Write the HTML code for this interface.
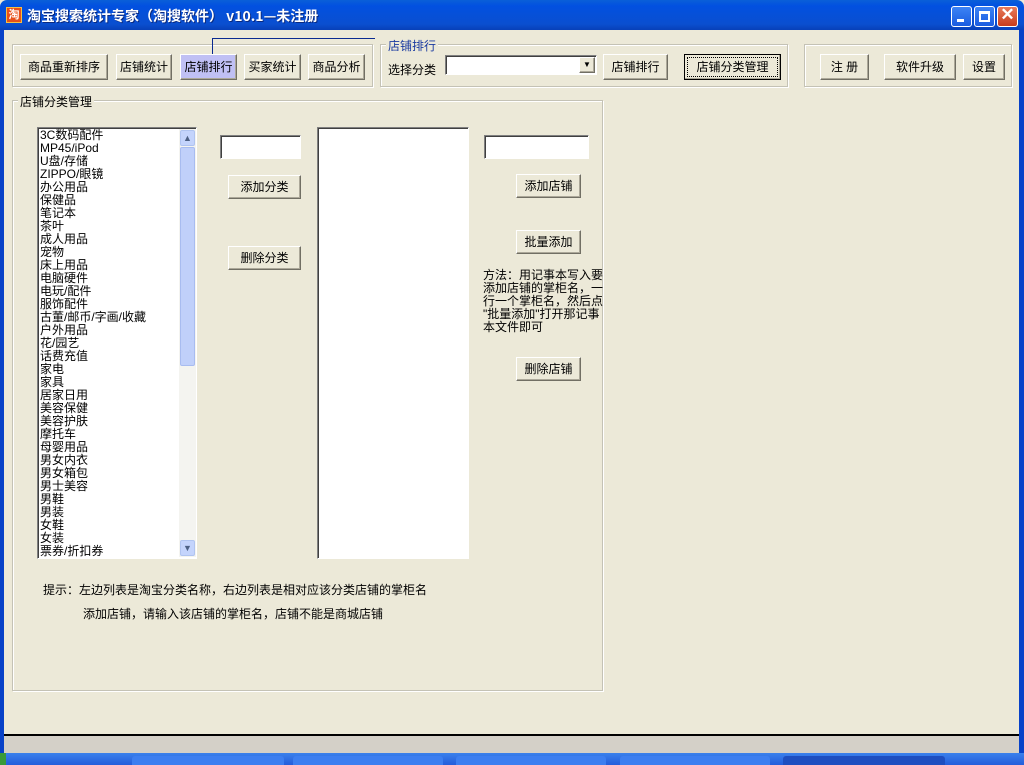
<!DOCTYPE html>
<html><head><meta charset="utf-8"><style>
*{margin:0;padding:0;box-sizing:border-box}
body{width:1024px;height:765px;overflow:hidden;background:#ece9d8;position:relative;font-family:"Liberation Sans","Noto Sans CJK SC","WenQuanYi Zen Hei",sans-serif;font-size:12px;color:#000}
.a{position:absolute}
.title{left:0;top:0;width:1024px;height:30px;background:linear-gradient(#0a5fd8,#0250e0 20%,#0a4fd0 80%,#0840b8);border-radius:7px 7px 0 0}
.title span{position:absolute;left:27px;top:6px;color:#fff;font-weight:bold;font-size:14px;font-family:"WenQuanYi Zen Hei","Noto Sans CJK SC",sans-serif;text-shadow:1px 1px #0a2a80}
.fl{left:0;top:30px;width:4px;height:723px;background:#0842c8}
.fr{left:1019px;top:30px;width:5px;height:723px;background:#0842c8}
.btn{position:absolute;background:#ece9d8;border:1px solid;border-color:#fff #716f64 #716f64 #fff;box-shadow:inset -1px -1px #aca899;text-align:center;line-height:22px;font-size:12px}
.grp{position:absolute;border:1px solid #c4c2b5;box-shadow:1px 1px #fff, inset 1px 1px #fff}
.lbl{position:absolute;background:#ece9d8;padding:0 2px;font-size:12px}
.sunk{position:absolute;background:#fff;border:1px solid;border-color:#808080 #fff #fff #808080;box-shadow:inset 1px 1px #404040}
.list div{height:13px;line-height:13px;font-size:12px;white-space:nowrap}
.wb{position:absolute;top:6px;width:21px;height:21px;border:1px solid #fff;border-radius:3px;background:linear-gradient(#3c83f5,#1a5ce0)}
</style></head><body>
<div class="a title"><div class="a" style="left:6px;top:7px;width:16px;height:16px;background:#e8501a;border:1px solid #f8c040;color:#fff;font-size:11px;line-height:14px;text-align:center;font-weight:bold">淘</div><span>淘宝搜索统计专家（淘搜软件） v10.1—未注册</span>
<div class="wb" style="left:951px"><div class="a" style="left:5px;top:12px;width:7px;height:3px;background:#fff"></div></div>
<div class="wb" style="left:974px"><div class="a" style="left:4px;top:4px;width:11px;height:11px;border:2px solid #fff;border-top-width:3px"></div></div>
<div class="wb" style="left:997px;background:linear-gradient(#e87a5a,#c83c1c)"><div class="a" style="left:0;top:-2px;width:19px;text-align:center;color:#fff;font-size:17px;font-weight:bold">✕</div></div>
</div>
<div class="a fl"></div><div class="a fr"></div>

<div class="grp" style="left:12px;top:44px;width:361px;height:43px"></div>
<div class="btn" style="left:20px;top:54px;width:88px;height:26px;line-height:24px">商品重新排序</div>
<div class="btn" style="left:116px;top:54px;width:56px;height:26px;line-height:24px">店铺统计</div>
<div class="btn" style="left:180px;top:54px;width:57px;height:26px;line-height:24px;background:#c0c0f4">店铺排行</div>
<div class="btn" style="left:244px;top:54px;width:57px;height:26px;line-height:24px">买家统计</div>
<div class="btn" style="left:308px;top:54px;width:57px;height:26px;line-height:24px">商品分析</div>
<div class="a" style="left:212px;top:38px;width:163px;height:1px;background:#0a2a90"></div>
<div class="a" style="left:212px;top:38px;width:1px;height:16px;background:#0a2a90"></div>

<div class="grp" style="left:380px;top:44px;width:408px;height:43px"></div>
<div class="lbl" style="left:386px;top:37px;color:#1a3aa0">店铺排行</div>
<div class="a" style="left:388px;top:61px">选择分类</div>
<div class="sunk" style="left:445px;top:55px;width:152px;height:20px"><div class="btn" style="left:133px;top:1px;width:16px;height:16px;line-height:14px;font-size:8px">▼</div></div>
<div class="btn" style="left:603px;top:54px;width:65px;height:26px;line-height:24px">店铺排行</div>
<div class="btn" style="left:684px;top:54px;width:97px;height:26px;line-height:22px;border:1px solid #000"><div style="margin:2px;border:1px dotted #000;height:20px;line-height:18px">店铺分类管理</div></div>

<div class="grp" style="left:804px;top:44px;width:208px;height:43px"></div>
<div class="btn" style="left:820px;top:54px;width:49px;height:26px;line-height:24px">注 册</div>
<div class="btn" style="left:884px;top:54px;width:72px;height:26px;line-height:24px">软件升级</div>
<div class="btn" style="left:963px;top:54px;width:42px;height:26px;line-height:24px">设置</div>

<div class="grp" style="left:12px;top:100px;width:591px;height:591px"></div>
<div class="lbl" style="left:18px;top:93px">店铺分类管理</div>

<div class="sunk list" style="left:37px;top:127px;width:160px;height:432px;padding:1px 0 0 2px;overflow:hidden">
<div>3C数码配件</div><div>MP45/iPod</div><div>U盘/存储</div><div>ZIPPO/眼镜</div><div>办公用品</div><div>保健品</div><div>笔记本</div><div>茶叶</div><div>成人用品</div><div>宠物</div><div>床上用品</div><div>电脑硬件</div><div>电玩/配件</div><div>服饰配件</div><div>古董/邮币/字画/收藏</div><div>户外用品</div><div>花/园艺</div><div>话费充值</div><div>家电</div><div>家具</div><div>居家日用</div><div>美容保健</div><div>美容护肤</div><div>摩托车</div><div>母婴用品</div><div>男女内衣</div><div>男女箱包</div><div>男士美容</div><div>男鞋</div><div>男装</div><div>女鞋</div><div>女装</div><div>票券/折扣券</div>
<div class="a" style="left:141px;top:1px;width:17px;height:428px;background:#f4f4f0"></div>
<div class="a" style="left:142px;top:2px;width:15px;height:16px;border-radius:2px;background:#c4d4fc;border:1px solid #b0c4f0;color:#4d6185;font-size:9px;text-align:center;line-height:14px">▲</div>
<div class="a" style="left:142px;top:19px;width:15px;height:219px;border-radius:2px;background:#c0d0fa;border:1px solid #a8bcf0"></div>
<div class="a" style="left:142px;top:412px;width:15px;height:16px;border-radius:2px;background:#c4d4fc;border:1px solid #b0c4f0;color:#4d6185;font-size:9px;text-align:center;line-height:14px">▼</div>
</div>

<div class="sunk" style="left:220px;top:135px;width:81px;height:24px"></div>
<div class="btn" style="left:228px;top:175px;width:73px;height:24px">添加分类</div>
<div class="btn" style="left:228px;top:246px;width:73px;height:24px">删除分类</div>

<div class="sunk" style="left:317px;top:127px;width:152px;height:432px"></div>

<div class="sunk" style="left:484px;top:135px;width:105px;height:24px"></div>
<div class="btn" style="left:516px;top:174px;width:65px;height:24px">添加店铺</div>
<div class="btn" style="left:516px;top:230px;width:65px;height:24px">批量添加</div>
<div class="a" style="left:483px;top:269px;width:124px;line-height:13px;font-size:12px;white-space:nowrap">方法：用记事本写入要<br>添加店铺的掌柜名，一<br>行一个掌柜名，然后点<br>"批量添加"打开那记事<br>本文件即可</div>
<div class="btn" style="left:516px;top:357px;width:65px;height:24px">删除店铺</div>

<div class="a" style="left:43px;top:581px">提示：左边列表是淘宝分类名称，右边列表是相对应该分类店铺的掌柜名</div>
<div class="a" style="left:83px;top:605px">添加店铺，请输入该店铺的掌柜名，店铺不能是商城店铺</div>

<div class="a" style="left:4px;top:734px;width:1015px;height:2px;background:#000"></div>
<div class="a" style="left:4px;top:736px;width:1015px;height:17px;background:#d4d0c8"></div>
<div class="a" style="left:0;top:753px;width:1024px;height:12px;background:linear-gradient(#3a80ec,#245ddb)"></div>
<div class="a" style="left:0;top:753px;width:6px;height:12px;background:#3a9a3a"></div>
<div class="a" style="left:132px;top:756px;width:152px;height:9px;background:#3c7ef0;border-radius:3px 3px 0 0"></div>
<div class="a" style="left:293px;top:756px;width:150px;height:9px;background:#3c7ef0;border-radius:3px 3px 0 0"></div>
<div class="a" style="left:456px;top:756px;width:150px;height:9px;background:#3c7ef0;border-radius:3px 3px 0 0"></div>
<div class="a" style="left:620px;top:756px;width:150px;height:9px;background:#3c7ef0;border-radius:3px 3px 0 0"></div>
<div class="a" style="left:783px;top:756px;width:162px;height:9px;background:#1e4ec0;border-radius:3px 3px 0 0"></div>
</body></html>
